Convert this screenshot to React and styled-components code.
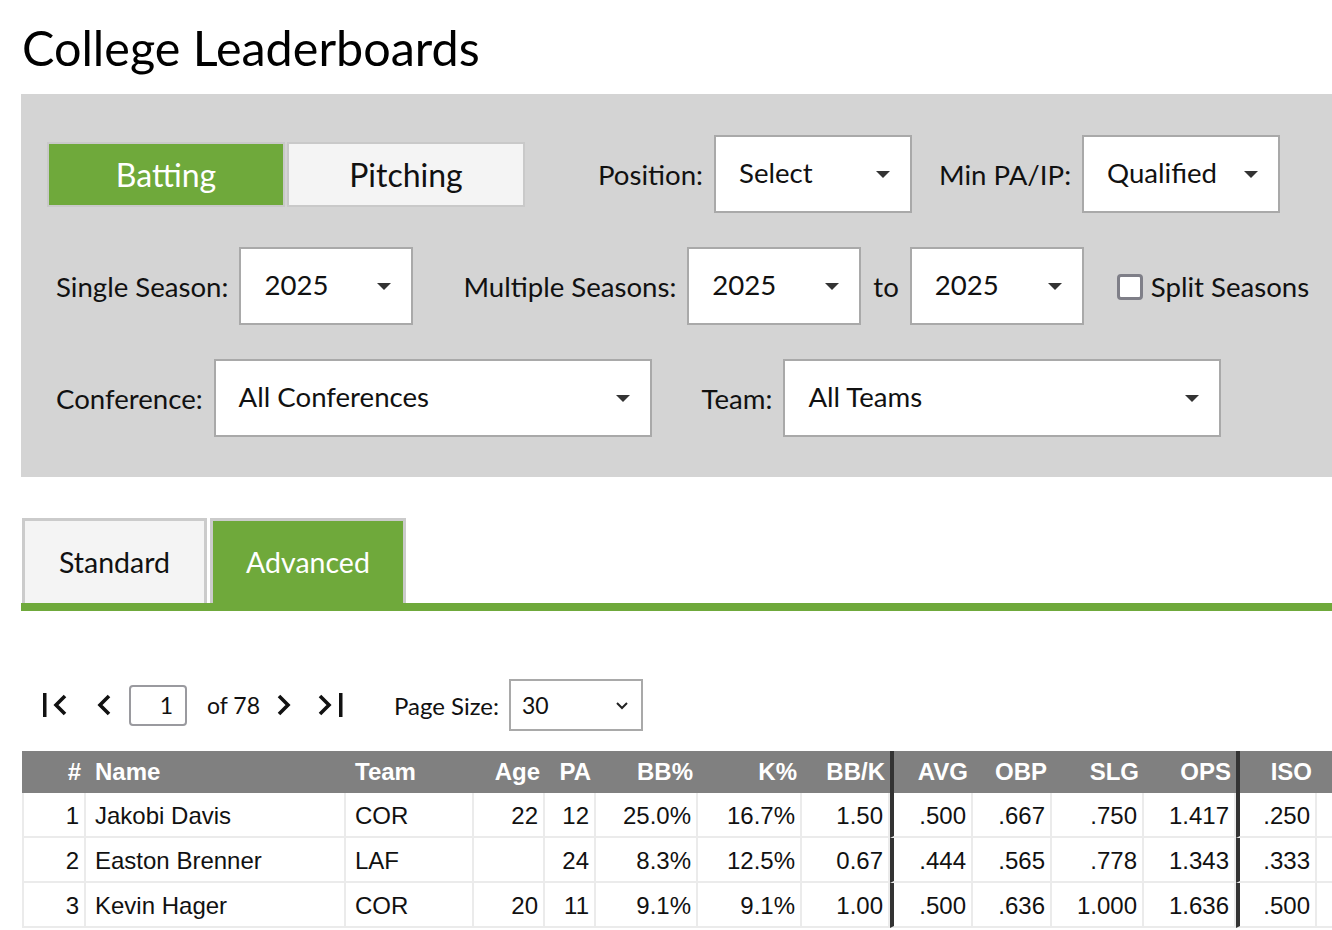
import React, { useState } from "react";
import styled, { createGlobalStyle } from "styled-components";

const GREEN = "#6fa93b";

const GlobalStyle = createGlobalStyle`
  html, body {
    margin: 0;
    padding: 0;
    overflow: hidden;
    background: #fff;
    font-family: Lato, "Open Sans", sans-serif;
    color: #111;
  }
`;

const Page = styled.div`
  width: 1400px;
  padding-left: 21px;
`;

const Title = styled.h1`
  margin: 19px 0 19px 1px;
  font-size: 48.5px;
  font-weight: 400;
  line-height: 56px;
  color: #000;
`;

// Filters -----------------------------------
const FilterPanel = styled.div`
  width: 1320px;
  background: #d4d4d4;
  padding: 41px 0 40px 26px;
  box-sizing: border-box;
`;

const FilterRow = styled.div`
  display: flex;
  align-items: center;
  height: 78px;
  & + & {
    margin-top: 34px;
  }
`;

const ToggleGroup = styled.div`
  display: flex;
`;

const ToggleButton = styled.button`
  width: 238px;
  height: 65px;
  box-sizing: border-box;
  border: 2px solid #c9c9c9;
  background: ${(p) => (p.$active ? GREEN : "#f4f4f4")};
  color: ${(p) => (p.$active ? "#fff" : "#111")};
  font-family: Lato, sans-serif;
  font-size: 32px;
  cursor: pointer;
  padding: 0;
  & + & {
    margin-left: 2px;
  }
`;

const Field = styled.div`
  display: flex;
  align-items: center;
  margin-left: ${(p) => p.$ml || 0}px;
`;

const Label = styled.span`
  font-size: 27.6px;
  color: #111;
  margin-left: ${(p) => p.$ml || 0}px;
  margin-right: ${(p) => (p.$mr === undefined ? 11 : p.$mr)}px;
`;

const SelectBox = styled.div`
  width: ${(p) => p.$w}px;
  height: 78px;
  box-sizing: border-box;
  border: 2px solid #a9a9a9;
  background: #fff;
  display: flex;
  align-items: center;
  justify-content: space-between;
  padding: 0 20px 4px 23px;
  font-size: 27.6px;
  color: #111;
  &::after {
    content: "";
    border-left: 7px solid transparent;
    border-right: 7px solid transparent;
    border-top: 7px solid #333;
    margin-top: 4px;
  }
`;

const CheckBox = styled.span`
  width: 26px;
  height: 26px;
  box-sizing: border-box;
  border: 3px solid #7f7f88;
  border-radius: 4px;
  background: #fff;
  margin-right: 8px;
  margin-top: 2px;
`;

// Tabs --------------------------------------
const TabBar = styled.div`
  display: flex;
  margin-top: 41px;
  padding-left: 1px;
`;

const Tab = styled.button`
  height: 85px;
  width: ${(p) => p.$w}px;
  box-sizing: border-box;
  border: 3px solid #cbcbcb;
  border-bottom: none;
  background: ${(p) => (p.$active ? GREEN : "#f4f4f4")};
  color: ${(p) => (p.$active ? "#fff" : "#111")};
  font-family: Lato, sans-serif;
  font-size: 28.5px;
  padding: 0;
  cursor: pointer;
  & + & {
    margin-left: 3px;
  }
`;

const GreenBar = styled.div`
  width: 1320px;
  height: 8px;
  background: ${GREEN};
`;

// Pager -------------------------------------
const Pager = styled.div`
  display: flex;
  align-items: center;
  margin-top: 68px;
  height: 52px;
  padding-left: 22px;
  font-size: 23px;
`;

const IconButton = styled.span`
  display: flex;
  align-items: center;
  margin-left: ${(p) => p.$ml || 0}px;
  cursor: pointer;
`;

const PageInput = styled.div`
  width: 58px;
  height: 41px;
  box-sizing: border-box;
  border: 2px solid #9a9a9f;
  border-radius: 4px;
  margin-left: 17px;
  text-align: right;
  padding-right: 12px;
  line-height: 37px;
  font-size: 23px;
`;

const PagerText = styled.span`
  margin-left: ${(p) => p.$ml || 0}px;
  font-size: ${(p) => p.$size || 23}px;
  color: #111;
`;

const SizeSelect = styled.div`
  width: 134px;
  height: 52px;
  box-sizing: border-box;
  border: 2px solid #a9a9a9;
  margin-left: 10px;
  display: flex;
  align-items: center;
  justify-content: space-between;
  padding: 0 12px 0 11px;
  font-size: 23px;
`;

// Table -------------------------------------
const TableWrap = styled.div`
  margin-top: 20px;
  margin-left: 1px;
`;

const Table = styled.table`
  border-collapse: separate;
  border-spacing: 0;
  table-layout: fixed;
  width: 1400px;
  font-family: "Liberation Sans", Arial, sans-serif;
  font-size: 24px;
`;

const Th = styled.th`
  box-sizing: border-box;
  width: ${(p) => p.$w}px;
  height: 42px;
  background: #808080;
  color: #fff;
  font-weight: 700;
  text-align: ${(p) => p.$align};
  padding: ${(p) => (p.$align === "left" ? "0 6px 0 9px" : "0 5px 0 4px")};
  border-left: ${(p) => (p.$divider ? "4px solid #333" : "none")};
  white-space: nowrap;
  overflow: hidden;
`;

const Td = styled.td`
  box-sizing: border-box;
  height: 45px;
  text-align: ${(p) => p.$align};
  padding: ${(p) => (p.$align === "left" ? "3px 6px 0 9px" : "3px 5px 0 4px")};
  border-right: 2px solid #ebebeb;
  border-bottom: 2px solid #ebebeb;
  border-left: ${(p) => (p.$divider ? "4px solid #333" : "none")};
  color: #111;
  white-space: nowrap;
  overflow: hidden;
  &:first-child {
    border-left: 2px solid #ebebeb;
  }
`;

const Caret = () => (
  <svg width="14" height="10" viewBox="0 0 14 10">
    <path d="M2 3 L7 8 L12 3" fill="none" stroke="#222" strokeWidth="2" />
  </svg>
);

const Chevron = ({ dir }) => (
  <svg width="16" height="24" viewBox="0 0 16 24">
    <path
      d={dir === "left" ? "M13 3 L4 12 L13 21" : "M3 3 L12 12 L3 21"}
      fill="none"
      stroke="#111"
      strokeWidth="3.6"
    />
  </svg>
);

const EdgeChevron = ({ dir }) => (
  <svg width="27" height="26" viewBox="0 0 27 26">
    {dir === "left" ? (
      <>
        <rect x="0" y="1" width="3.5" height="24" fill="#111" />
        <path d="M22 4 L13 13 L22 22" fill="none" stroke="#111" strokeWidth="3.6" />
      </>
    ) : (
      <>
        <path d="M4 4 L13 13 L4 22" fill="none" stroke="#111" strokeWidth="3.6" />
        <rect x="23" y="1" width="3.5" height="24" fill="#111" />
      </>
    )}
  </svg>
);

// last column runs off the edge of the page, like the source
const columns = [
  { key: "rank", label: "#", w: 64, align: "right" },
  { key: "name", label: "Name", w: 260, align: "left" },
  { key: "team", label: "Team", w: 128, align: "left" },
  { key: "age", label: "Age", w: 71, align: "right" },
  { key: "pa", label: "PA", w: 51, align: "right" },
  { key: "bb", label: "BB%", w: 102, align: "right" },
  { key: "k", label: "K%", w: 104, align: "right" },
  { key: "bbk", label: "BB/K", w: 88, align: "right" },
  { key: "avg", label: "AVG", w: 83, align: "right", divider: true },
  { key: "obp", label: "OBP", w: 79, align: "right" },
  { key: "slg", label: "SLG", w: 92, align: "right" },
  { key: "ops", label: "OPS", w: 92, align: "right" },
  { key: "iso", label: "ISO", w: 81, align: "right", divider: true },
  { key: "more", label: "", w: 125, align: "right" },
];

const players = [
  { rank: 1, name: "Jakobi Davis", team: "COR", age: "22", pa: "12", bb: "25.0%", k: "16.7%", bbk: "1.50", avg: ".500", obp: ".667", slg: ".750", ops: "1.417", iso: ".250" },
  { rank: 2, name: "Easton Brenner", team: "LAF", age: "", pa: "24", bb: "8.3%", k: "12.5%", bbk: "0.67", avg: ".444", obp: ".565", slg: ".778", ops: "1.343", iso: ".333" },
  { rank: 3, name: "Kevin Hager", team: "COR", age: "20", pa: "11", bb: "9.1%", k: "9.1%", bbk: "1.00", avg: ".500", obp: ".636", slg: "1.000", ops: "1.636", iso: ".500" },
];

export default function App() {
  const [statType, setStatType] = useState("batting");
  const [tab, setTab] = useState("advanced");

  return (
    <Page>
      <GlobalStyle />
      <Title>College Leaderboards</Title>

      <FilterPanel>
        <FilterRow>
          <ToggleGroup>
            <ToggleButton $active={statType === "batting"} onClick={() => setStatType("batting")}>
              Batting
            </ToggleButton>
            <ToggleButton $active={statType === "pitching"} onClick={() => setStatType("pitching")}>
              Pitching
            </ToggleButton>
          </ToggleGroup>
          <Field $ml={73}>
            <Label>Position:</Label>
            <SelectBox $w={198}>Select</SelectBox>
          </Field>
          <Field $ml={27}>
            <Label>Min PA/IP:</Label>
            <SelectBox $w={198}>Qualified</SelectBox>
          </Field>
        </FilterRow>

        <FilterRow>
          <Field $ml={9}>
            <Label>Single Season:</Label>
            <SelectBox $w={174}>2025</SelectBox>
          </Field>
          <Field $ml={50}>
            <Label>Multiple Seasons:</Label>
            <SelectBox $w={174}>2025</SelectBox>
            <Label $ml={12}>to</Label>
            <SelectBox $w={174}>2025</SelectBox>
          </Field>
          <Field $ml={33}>
            <CheckBox />
            <Label $mr={0}>Split Seasons</Label>
          </Field>
        </FilterRow>

        <FilterRow>
          <Field $ml={9}>
            <Label>Conference:</Label>
            <SelectBox $w={438}>All Conferences</SelectBox>
          </Field>
          <Field $ml={50}>
            <Label>Team:</Label>
            <SelectBox $w={438}>All Teams</SelectBox>
          </Field>
        </FilterRow>
      </FilterPanel>

      <TabBar>
        <Tab $w={185} $active={tab === "standard"} onClick={() => setTab("standard")}>
          Standard
        </Tab>
        <Tab $w={196} $active={tab === "advanced"} onClick={() => setTab("advanced")}>
          Advanced
        </Tab>
      </TabBar>
      <GreenBar />

      <Pager>
        <IconButton>
          <EdgeChevron dir="left" />
        </IconButton>
        <IconButton $ml={26}>
          <Chevron dir="left" />
        </IconButton>
        <PageInput>1</PageInput>
        <PagerText $ml={20}>of 78</PagerText>
        <IconButton $ml={16}>
          <Chevron dir="right" />
        </IconButton>
        <IconButton $ml={24}>
          <EdgeChevron dir="right" />
        </IconButton>
        <PagerText $ml={51} $size={24}>Page Size:</PagerText>
        <SizeSelect>
          30
          <Caret />
        </SizeSelect>
      </Pager>

      <TableWrap>
        <Table>
          <thead>
            <tr>
              {columns.map((c) => (
                <Th key={c.key} $w={c.w} $align={c.align} $divider={c.divider}>
                  {c.label}
                </Th>
              ))}
            </tr>
          </thead>
          <tbody>
            {players.map((p) => (
              <tr key={p.rank}>
                {columns.map((c) => (
                  <Td key={c.key} $align={c.align} $divider={c.divider}>
                    {p[c.key]}
                  </Td>
                ))}
              </tr>
            ))}
          </tbody>
        </Table>
      </TableWrap>
    </Page>
  );
}
